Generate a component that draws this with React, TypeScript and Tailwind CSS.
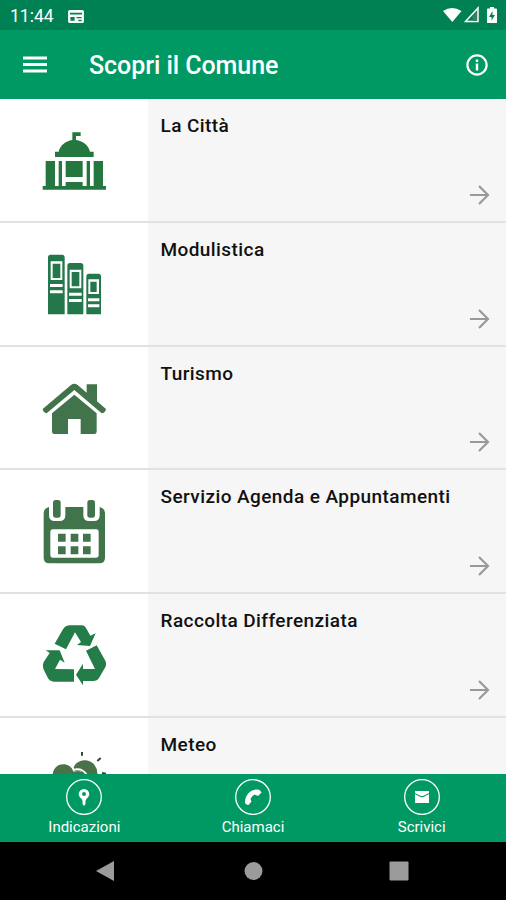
import type { ReactNode } from 'react';

function CityHallIcon() {
  return (
    <svg viewBox="0 -10 270 270" className="h-[90px] w-[90px] text-[#24773f]" fill="currentColor">
      <path d="M127 36H152V47H138V59C160 62 176 76 180 94H191V110H75V94H86C90 76 106 62 127 59Z" />
      <path d="M47 122H75V197H47ZM86 122H96V197H86ZM107 122H158V170H107ZM107 185H158V197H107ZM170 122H180V197H170ZM191 122H219V197H191Z" />
      <path d="M38 197H228V208H38Z" />
    </svg>
  );
}

function BindersIcon() {
  return (
    <svg viewBox="0 1 270 270" className="h-[90px] w-[90px] text-[#24774a]" fill="currentColor" fillRule="evenodd">
      <path d="M54 50Q54 42 62 42H96Q104 42 104 50V221H54ZM62 62V118H97V62ZM68 69H91V112H68ZM60 130V139H98V130ZM60 149V158H98V149Z" />
      <path d="M112 75Q112 67 120 67H152Q160 67 160 75V221H112ZM119 87V143H154V87ZM125 94H148V137H125ZM117 156V165H155V156ZM117 175V184H155V175Z" />
      <path d="M169 107Q169 99 177 99H205Q213 99 213 107V221H169ZM175 116V160H207V116ZM181 123H200V154H181ZM174 173V182H208V173ZM174 191V200H208V191Z" />
    </svg>
  );
}

function HouseIcon() {
  return (
    <svg viewBox="0 -18 270 270" className="h-[90px] w-[90px] text-[#41744a]" fill="currentColor">
      <path d="M38 114L123 42Q133 35 143 42L170 65V40H201V91L228 114Q226 126 215 127L133 57L50 127Q40 125 38 114Z" />
      <path d="M66 127L133 71L200 127V182Q200 189 193 189H152V144H114V189H73Q66 189 66 182Z" />
    </svg>
  );
}

function CalendarIcon() {
  return (
    <svg viewBox="0 -7 270 270" className="h-[90px] w-[90px] text-[#41744a]" fill="currentColor" fillRule="evenodd">
      <path d="M57 50V74Q57 92 74 92H89Q106 92 106 74V50H160V74Q160 92 177 92H192Q209 92 209 74V50Q225 54 225 68V202Q225 219 208 219H58Q41 219 41 202V68Q41 54 57 50ZM68 117Q61 117 61 124V194Q61 202 69 202H198Q206 202 206 194V124Q206 117 199 117Z" />
      <rect x="69" y="29" width="23" height="53" rx="8" />
      <rect x="172" y="29" width="23" height="53" rx="8" />
      <path d="M84 130H107V154H84ZM122 130H145V154H122ZM159 130H182V154H159ZM84 168H107V192H84ZM122 168H145V192H122ZM159 168H182V192H159Z" />
    </svg>
  );
}

function RecycleIcon() {
  return (
    <svg viewBox="0 -10 270 270" className="h-[90px] w-[90px] text-[#247c48]" fill="currentColor">
      <path d="M74 85L98 43Q106 30 120 30H157Q164 31 168 38L181 61L197 54L180 92L141 89L153 80L135 51L108 102Z" />
      <path d="M168 106L200 90L226 136Q231 147 225 157L207 188Q202 197 190 197H159V210L138 178L159 145V161H195Z" />
      <path d="M132 162V199H71Q59 198 54 189L40 160Q36 151 41 140L59 113L47 105H89L104 142L90 133L75 161Z" />
    </svg>
  );
}

function WeatherIcon() {
  return (
    <svg viewBox="0 1 270 270" className="h-[90px] w-[90px] text-[#4b7148]" fill="currentColor">
      <path d="M68 116C72 78 120 76 131 108Q155 101 170 118V180H68Z" />
      <path d="M131 95C140 70 177 66 193 87Q203 99 202 116V150H177C176 113 151 99 134 106Z" />
      <path d="M128 103Q156 93 172 120" fill="none" stroke="white" strokeWidth="5" />
      <g stroke="#304838" strokeWidth="6">
        <path d="M156 49V60M202 76L212 67M216 112L228 114" />
      </g>
    </svg>
  );
}

const rows: { label: string; icon: ReactNode }[] = [
  { label: 'La Città', icon: <CityHallIcon /> },
  { label: 'Modulistica', icon: <BindersIcon /> },
  { label: 'Turismo', icon: <HouseIcon /> },
  { label: 'Servizio Agenda e Appuntamenti', icon: <CalendarIcon /> },
  { label: 'Raccolta Differenziata', icon: <RecycleIcon /> },
  { label: 'Meteo', icon: <WeatherIcon /> },
];

function Row({ label, icon }: { label: string; icon: ReactNode }) {
  return (
    <li className="flex h-[123.75px] shrink-0 border-b-2 border-[#e2e2e2]">
      <div className="w-[148px] shrink-0 bg-white pt-[18px] pl-[30px]">{icon}</div>
      <div className="flex flex-1 flex-col justify-between bg-[#f6f6f6] pt-[15px] pr-[14px] pb-[14px] pl-[13px]">
        <h2 className="-ml-[0.5px] text-[19px] leading-6 font-medium tracking-[0.42px] whitespace-nowrap text-[#111]">{label}</h2>
        <svg viewBox="0 0 24 24" className="h-6 w-6 self-end" fill="none" stroke="#999" strokeWidth="2.2">
          <path d="M2 12H20M11 3L20 12L11 21" />
        </svg>
      </div>
    </li>
  );
}

function Action({ label, children }: { label: string; children: ReactNode }) {
  return (
    <button className="flex flex-1 flex-col items-center pt-[4px]">
      <svg viewBox="0 0 38 38" className="h-[38px] w-[38px] shrink-0" fill="white">
        <circle cx="19" cy="19" r="17.3" fill="none" stroke="white" strokeWidth="1.3" />
        {children}
      </svg>
      <span className="mt-[2px] text-[15px] leading-[18px] text-white">{label}</span>
    </button>
  );
}

export default function App() {
  return (
    <div className="flex h-[900px] w-[506px] flex-col overflow-hidden bg-white font-['Roboto',sans-serif]">
      <div className="flex h-[30px] shrink-0 items-center bg-[#008154] pl-[10px] text-white">
        <span className="w-[58px] pt-[2px] text-[17.5px] leading-5">11:44</span>
        <svg viewBox="0 0 17 15" className="mt-[1px] h-[14px] w-[16px]" fill="white" fillRule="evenodd">
          <path d="M2 1H15Q17 1 17 3V13Q17 15 15 15H2Q0 15 0 13V3Q0 1 2 1ZM2 4V6H15V4ZM2.500 8.500V12.500H7V8.500ZM9 8.500V10H14.500V8.500ZM11 11.500V13H14.500V11.500Z" />
        </svg>
        <svg viewBox="0 0 56 18" className="mr-[7px] ml-auto h-[18px] w-[56px]" fill="white">
          <path d="M0 5Q9 -1 18.500 5L9.300 16Z" />
          <path d="M22.500 15.500L35 2V15.500Z" fill="none" stroke="white" strokeWidth="1.500" />
          <path d="M29.500 15V9.500L34 5V15Z" fill="#39815b" />
          <path fillRule="evenodd" d="M46 2.500H47V1H51V2.500H53Q54 2.500 54 3.500V17H44V3.500Q44 2.500 45 2.500ZM49.500 5L46 11H48.500V14.500L52 9H49.500Z" />
        </svg>
      </div>
      <header className="flex h-[69px] shrink-0 items-center bg-[#009964] pr-[18px] pl-[23px] text-white">
        <svg viewBox="0 0 24 18" className="h-[18px] w-6" fill="white">
          <path d="M0 0.500H24V3.500H0ZM0 7H24V10H0ZM0 13.500H24V16.500H0Z" />
        </svg>
        <h1 className="ml-[42px] pt-[2px] text-[25px] leading-8 font-medium tracking-[-0.06px]">Scopri il Comune</h1>
        <svg viewBox="0 0 22 22" className="ml-auto h-[22px] w-[22px]" fill="white">
          <circle cx="11" cy="11" r="9.600" fill="none" stroke="white" strokeWidth="2.200" />
          <path d="M9.800 5.500H12.200V8H9.800ZM9.800 9.500H12.200V16.500H9.800Z" />
        </svg>
      </header>
      <ul className="flex min-h-0 flex-1 flex-col overflow-hidden">
        {rows.map((row) => (
          <Row key={row.label} label={row.label} icon={row.icon} />
        ))}
      </ul>
      <nav className="flex h-[68px] shrink-0 bg-[#009964]">
        <Action label="Indicazioni">
          <path fillRule="evenodd" d="M19 11A5.300 5.300 0 0 1 24.300 16.300C24.300 19 21 20.500 20.500 23V26L19 28L17.500 26V23C17 20.500 13.700 19 13.700 16.300A5.300 5.300 0 0 1 19 11ZM19 14A2 2 0 1 0 19 18A2 2 0 1 0 19 14Z" />
        </Action>
        <Action label="Chiamaci">
          <path d="M11 24C11 17 17 11 24 11.500Q26 11.500 27.500 14.500L24 18L20.500 16.500Q17.500 18 16.500 21L17.500 23.500L14.500 27Q11 26.500 11 24Z" />
        </Action>
        <Action label="Scrivici">
          <path d="M12 13H26V15L20.500 17.800Q19 18.500 17.500 17.800L12 15ZM12 16L17 18.800Q19 19.800 21 18.800L26 16V25H12Z" />
        </Action>
      </nav>
      <div className="flex h-[58px] shrink-0 items-center bg-black">
        <svg viewBox="0 0 506 58" className="h-[58px] w-[506px]" fill="#9b9b9b">
          <path d="M96 29L114 19V39Z" />
          <circle cx="253.500" cy="29" r="9" />
          <rect x="389.500" y="19.500" width="19" height="19" rx="1" />
        </svg>
      </div>
    </div>
  );
}
